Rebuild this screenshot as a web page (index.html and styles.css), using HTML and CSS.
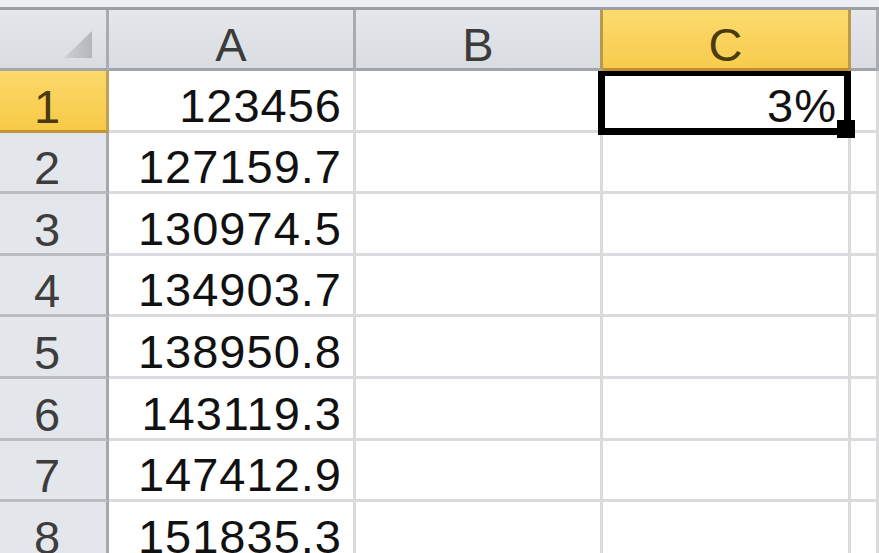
FILE: index.html
```html
<!DOCTYPE html>
<html>
<head>
<meta charset="utf-8">
<title>Book1</title>
<link rel="stylesheet" href="styles.css">
</head>
<body>
<div class="sheet">
  <div class="topbar"></div>
  <div class="grid">
    <div class="corner">
      <svg class="select-all" width="28" height="27" viewBox="0 0 28 27">
        <defs>
          <linearGradient id="tri" x1="0" y1="0" x2="1" y2="0">
            <stop offset="0" stop-color="#cdd1d5"/>
            <stop offset="1" stop-color="#b3b7bc"/>
          </linearGradient>
        </defs>
        <polygon points="28,0 28,27 0,27" fill="url(#tri)"/>
      </svg>
    </div>
    <div class="colhead">A</div>
    <div class="colhead before-sel">B</div>
    <div class="colhead sel">C</div>
    <div class="colhead"></div>

    <div class="rowhead sel">1</div>
    <div class="cell num">123456</div>
    <div class="cell"></div>
    <div class="cell num active">3%<span class="selbox"></span><span class="handle"></span></div>
    <div class="cell"></div>

    <div class="rowhead">2</div>
    <div class="cell num">127159.7</div>
    <div class="cell"></div>
    <div class="cell"></div>
    <div class="cell"></div>

    <div class="rowhead">3</div>
    <div class="cell num">130974.5</div>
    <div class="cell"></div>
    <div class="cell"></div>
    <div class="cell"></div>

    <div class="rowhead">4</div>
    <div class="cell num">134903.7</div>
    <div class="cell"></div>
    <div class="cell"></div>
    <div class="cell"></div>

    <div class="rowhead">5</div>
    <div class="cell num">138950.8</div>
    <div class="cell"></div>
    <div class="cell"></div>
    <div class="cell"></div>

    <div class="rowhead">6</div>
    <div class="cell num">143119.3</div>
    <div class="cell"></div>
    <div class="cell"></div>
    <div class="cell"></div>

    <div class="rowhead">7</div>
    <div class="cell num">147412.9</div>
    <div class="cell"></div>
    <div class="cell"></div>
    <div class="cell"></div>

    <div class="rowhead">8</div>
    <div class="cell num">151835.3</div>
    <div class="cell"></div>
    <div class="cell"></div>
    <div class="cell"></div>
  </div>
</div>
</body>
</html>
```

FILE: styles.css
```css
html, body {
  margin: 0;
  padding: 0;
  background: #ffffff;
  overflow: hidden;
}

.sheet {
  width: 879px;
  height: 553px;
  overflow: hidden;
  font-family: "Liberation Sans", Arial, sans-serif;
}

.topbar {
  height: 7px;
  background: #eceef2;
  border-bottom: 3px solid #9ca0a5;
}

.grid {
  display: grid;
  grid-template-columns: 109px 247px 247px 248px 28px;
  grid-template-rows: 61px repeat(8, 61.6px);
}

.grid > div {
  box-sizing: border-box;
  display: flex;
  align-items: flex-end;
  line-height: 47px;
  font-size: 47px;
}

/* header strip */
.corner,
.colhead {
  background: linear-gradient(#e4e7eb, #d9dde2);
  border-right: 3px solid #a8acb1;
  border-bottom: 3px solid #a2a6ab;
}

.corner {
  justify-content: flex-end;
  padding: 0 14px 10px 0;
}

.select-all {
  display: block;
}

.colhead {
  justify-content: center;
  color: #3b3b3b;
  font-size: 46px;
}

.colhead.before-sel {
  border-right-color: #b89a4e;
}

.colhead.sel {
  background: linear-gradient(#fcdb6e, #f8cb4c);
  border-right-color: #b89a4e;
  border-bottom-color: #c08e2e;
  color: #4a3a10;
}

.rowhead {
  justify-content: center;
  padding-right: 12px;
  background: #e3e6eb;
  border-right: 3px solid #a4a8ad;
  border-bottom: 3px solid #b9bdc2;
  color: #3d3d3d;
  font-size: 46px;
}

.rowhead.sel {
  background: linear-gradient(#fcd96a, #f7c948);
  border-right-color: #bda05a;
  border-bottom-color: #c59534;
  color: #4a3a10;
}

/* data cells */
.cell {
  justify-content: flex-end;
  padding: 0 11px 1px 0;
  background: #ffffff;
  border-right: 3px solid #d9dbde;
  border-bottom: 3px solid #d9dbde;
  color: #111111;
  letter-spacing: 1px;
  white-space: nowrap;
}

.cell.active {
  position: relative;
}

/* active cell outline drawn over the gridlines */
.selbox {
  position: absolute;
  left: -5px;
  top: 0;
  width: 253px;
  height: 64px;
  box-sizing: border-box;
  border: 7px solid #000000;
  border-top-width: 5px;
}

.handle {
  position: absolute;
  right: -7px;
  bottom: -8px;
  width: 18px;
  height: 18px;
  background: #000000;
}
```
